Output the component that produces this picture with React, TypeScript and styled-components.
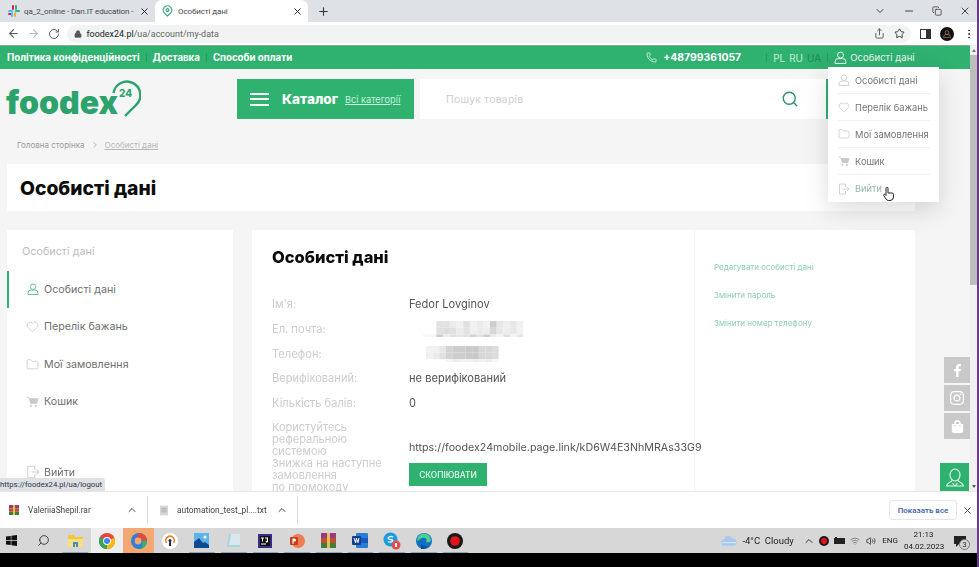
import React from "react";
import styled, { createGlobalStyle } from "styled-components";
import {
  ArrowLeft, ArrowRight, RotateCw, Lock, Share, Star, X, Plus, Minus, ChevronDown, ChevronUp,
  MoreVertical, Copy, Phone, Search, Heart, Folder, ChevronRight, Wifi, Volume2,
} from "lucide-react";
import { FaFacebookF, FaInstagram, FaShoppingBag } from "react-icons/fa";

const GREEN = "#2fb170";
const WEB = `Inter, "Noto Sans", "Liberation Sans", sans-serif`;
const UI = `Roboto, "Liberation Sans", Arial, sans-serif`;

const Global = createGlobalStyle`
  html, body { margin: 0; padding: 0; width: 979px; height: 567px; overflow: hidden; background: #000; }
  * { box-sizing: border-box; }
  svg { flex-shrink: 0; }
`;

const Shell = styled.div`
  width: 979px; height: 567px; display: flex; overflow: hidden; font-family: ${WEB};
`;
const Screen = styled.div`
  width: 977px; height: 567px; display: flex; flex-direction: column; filter: blur(0.35px);
`;
const Stripe = styled.div`width: 2px; background: #6a3b85;`;

/* Browser chrome */
const TabStrip = styled.div`
  height: 22px; background: #dee1e6; display: flex; align-items: stretch; font-family: ${UI}; color: #45494e;
`;
const Tab = styled.div<{ $active?: boolean }>`
  width: ${p => (p.$active ? 153 : 155)}px; display: flex; align-items: center; gap: ${p => (p.$active ? 5 : 4)}px;
  padding: 0 5px 0 ${p => (p.$active ? 7 : 8)}px;
  background: ${p => (p.$active ? "#fff" : "transparent")};
  border-radius: 7px 7px 0 0; font-size: 8px; letter-spacing: -.1px; white-space: nowrap;
`;
const TabTitle = styled.span`flex: 1;`;
const NewTab = styled.div`width: 30px; display: flex; align-items: center; justify-content: center; color: #333;`;
const WinControls = styled.div`
  margin-left: auto; display: flex; align-items: center; gap: 17px; padding-right: 6px; color: #444;
`;
const Toolbar = styled.div`
  height: 23px; background: #fff; display: flex; align-items: center; padding-left: 3px; color: #5f6368;
`;
const NavBtn = styled.div<{ $dim?: boolean }>`
  width: 20.5px; display: flex; justify-content: center; color: ${p => (p.$dim ? "#b9bcc0" : "#5a5d61")};
`;
const Omnibox = styled.div`
  margin-left: 2px; width: 844px; height: 18px; border-radius: 9px; background: #f1f3f4;
  display: flex; align-items: center; padding: 0 6px 0 7px; font-family: ${UI}; font-size: 8.95px; gap: 5px;
`;
const Host = styled.span`color: #222;`;
const UrlPath = styled.span`color: #666;`;
const OmniRight = styled.div`margin-left: auto; display: flex; gap: 9px; align-items: center; color: #555;`;
const ToolRight = styled.div`display: flex; align-items: center; gap: 9px; padding-left: 9px; color: #333;`;
const Avatar = styled.div`width: 14px; height: 14px; border-radius: 50%; background: #16100e; display: flex; align-items: center; justify-content: center;`;
const SidePanelIcon = styled.div`width: 11px; height: 10px; border: 1.5px solid #333; border-right-width: 5px;`;

/* Page */
const PageRow = styled.div`height: 446px; display: flex;`;
const Page = styled.div`
  position: relative; width: 970px; height: 446px; overflow: hidden; background: #f5f5f6;
`;
const ScrollTrack = styled.div`
  width: 7px; background: #f1f1f1; display: flex; flex-direction: column; align-items: center; position: relative;
`;
const ScrollArrow = styled.div<{ $down?: boolean }>`
  height: 10px; width: 100%; display: flex; justify-content: center; align-items: center;
  &::before {
    content: ""; border-left: 2.5px solid transparent; border-right: 2.5px solid transparent;
    ${p => (p.$down ? "border-top: 3px solid #555;" : "border-bottom: 3px solid #777;")}
  }
`;
const ScrollThumb = styled.div`width: 100%; height: 230px; background: #bdbdbd;`;
const ScrollSpace = styled.div`flex: 1;`;

const TopBar = styled.div`
  height: 24px; background: ${GREEN}; border-top: 1px solid #8aa99a; display: flex; align-items: center; padding-left: 7px; color: #fff;
`;
const TopLink = styled.a`font-size: 9.7px; font-weight: 700; color: #fff; white-space: nowrap;`;
const TopSep = styled.span<{ $ml?: number; $mr?: number }>`
  width: 1px; height: 9px; background: #279a61; margin: 0 ${p => p.$mr ?? 6}px 0 ${p => p.$ml ?? 6}px;
`;
const PhoneBox = styled.div`
  margin-left: 354px; display: flex; align-items: center; gap: 6px; font-size: 10.4px; font-weight: 700; white-space: nowrap;
`;
const Lang = styled.span<{ $cur?: boolean }>`font-size: 10px; margin-right: 4px; color: ${p => (p.$cur ? "#23865a" : "#c8efdb")};`;
const AccountLink = styled.div`display: flex; align-items: center; gap: 3px; font-size: 9.6px; color: #e4f7ee; white-space: nowrap;`;

const Header = styled.div`height: 66px; display: flex; padding: 10px 0 0 6px;`;
const Logo = styled.div`position: relative; width: 135px; height: 40px;`;
const LogoText = styled.span`
  position: absolute; left: 0; top: 6px; font: 900 32px/36px ${WEB}; color: #2ba36b; letter-spacing: 0;
`;
const LogoBadge = styled.svg`position: absolute; right: 0; top: 1px;`;
const Catalog = styled.div`
  margin-left: 96px; width: 177px; height: 40px; background: ${GREEN}; display: flex; align-items: center; padding-left: 13px; color: #fff;
`;
const Burger = styled.div`
  width: 19px; height: 13px; border-top: 2.5px solid #fff; border-bottom: 2.5px solid #fff; position: relative; margin-right: 13px;
  &::after { content: ""; position: absolute; left: 0; right: 0; top: 3px; height: 2.5px; background: #fff; }
`;
const CatalogTitle = styled.b`font-size: 13.6px; font-weight: 800; margin-right: 7px;`;
const CatalogLink = styled.a`font-size: 9.2px; text-decoration: underline; color: #c9f1dd; white-space: nowrap;`;
const SearchBox = styled.div`
  margin-left: 6px; width: 408px; height: 40px; background: #fff; border-right: 2px solid ${GREEN};
  display: flex; align-items: center; justify-content: space-between; padding: 0 27px 0 26px;
  color: #cfcfcf; font-size: 10.5px; letter-spacing: .2px;
`;
const Crumbs = styled.div`
  height: 29px; display: flex; align-items: center; padding: 0 0 9px 17px; gap: 5px; font-size: 8px; color: #9b9b9b; white-space: nowrap;
`;
const CrumbCurrent = styled.a`text-decoration: underline; color: #b5b5b5;`;
const TitleCard = styled.div`
  margin-left: 7px; width: 908px; height: 47px; background: #fff; display: flex; align-items: center; padding-left: 13px;
`;
const PageTitle = styled.h1`margin: 0; font-size: 19.3px; font-weight: 800; color: #0c0c0c;`;
const Columns = styled.div`margin: 19px 0 0 7px; width: 908px; display: grid; grid-template-columns: 226px 663px; gap: 19px;`;

const SideCard = styled.aside`background: #fff; height: 300px; padding-top: 15px;`;
const SideHead = styled.div`height: 25.6px; padding-left: 15px; font-size: 10.8px; line-height: 14px; color: #bdbdbd;`;
const SideRow = styled.a<{ $active?: boolean; $gap?: boolean }>`
  height: 37.5px; display: flex; align-items: center; gap: 5px; padding-left: ${p => (p.$active ? 17 : 19)}px;
  border-left: ${p => (p.$active ? `2px solid ${GREEN}` : "0")};
  margin-top: ${p => (p.$gap ? 33 : 0)}px; font-size: 10.7px; color: #6f6f6f; white-space: nowrap;
`;
const IconSlot = styled.span`width: 13px; display: flex; justify-content: center;`;
const MainCard = styled.section`background: #fff; height: 300px; display: grid; grid-template-columns: 442px 1fr;`;
const Info = styled.div`padding: 17px 0 0 20px;`;
const InfoTitle = styled.h2`margin: 0 0 25px; font-size: 16.5px; line-height: 20px; font-weight: 800; color: #0b0b0b;`;
const InfoGrid = styled.div`display: grid; grid-template-columns: 137px 1fr; grid-auto-rows: 24.7px; font-size: 11.1px; align-items: center;`;
const Label = styled.div`color: #cdcdcd;`;
const Value = styled.div`color: #555; white-space: nowrap;`;
const LongRow = styled.div`display: grid; grid-template-columns: 137px 1fr; font-size: 11px; padding-top: 7px;`;
const LongLabel = styled.div`color: #cdcdcd; line-height: 11.9px;`;
const LinkCell = styled.div`color: #555; white-space: nowrap; padding-top: 19px; line-height: 13px; font-size: 10.7px;`;
const CopyBtn = styled.button`
  margin-top: 9px; display: block; width: 78px; height: 23px; border: 0; background: ${GREEN}; color: #eafbf2;
  font: 500 8.4px ${WEB}; padding: 0;
`;
const Mosaic = styled.svg<{ $ml: number }>`display: block; margin-left: ${p => p.$ml}px;`;
const Actions = styled.div`border-left: 1px solid #f4f4f4; padding: 31px 0 0 19px; display: flex; flex-direction: column; gap: 14.6px;`;
const ActionLink = styled.a`font-size: 8px; line-height: 13.4px; color: #8bcfb2; white-space: nowrap;`;

/* Overlays */
const Menu = styled.div`
  position: absolute; left: 828px; top: 22px; width: 111px; height: 135px; background: #fff; padding: 0 9px 0 10px;
  box-shadow: 0 8px 24px rgba(0,0,0,.14); z-index: 3;
`;
const MenuRow = styled.a<{ $last?: boolean; $hover?: boolean }>`
  height: 27px; display: flex; align-items: center; gap: 5px; font-size: 9.3px; white-space: nowrap;
  color: ${p => (p.$hover ? "#94b8a7" : "#757575")};
  border-bottom: ${p => (p.$last ? "0" : "1px solid #f0f0f0")};
`;
const Cursor = styled.svg`position: absolute; left: 883px; top: 142px; z-index: 4;`;
const Social = styled.div`position: absolute; left: 944px; top: 312px; display: flex; flex-direction: column; gap: 2px; z-index: 2;`;
const SocialBtn = styled.a`width: 26px; height: 26px; background: #c9c9c9; color: #fff; display: flex; align-items: center; justify-content: center;`;
const Support = styled.div`
  position: absolute; left: 940px; top: 418px; width: 29px; height: 28px; background: ${GREEN};
  display: flex; align-items: center; justify-content: center; z-index: 2;
`;
const StatusTip = styled.div`
  position: absolute; left: 0; bottom: 0; width: 105px; height: 13px; background: #dee1e6; border-top-right-radius: 3px;
  font: 7.7px/13px ${UI}; color: #303336; white-space: nowrap; z-index: 5;
`;

/* Downloads */
const Downloads = styled.div`
  height: 37px; background: #fff; border-top: 1px solid #e6e6e6; display: flex; align-items: center; font-family: ${UI}; font-size: 8.4px; color: #444;
`;
const DlItem = styled.div<{ $w: number; $pad: number }>`
  width: ${p => p.$w}px; height: 28px; display: flex; align-items: center; padding: 0 9px 0 ${p => p.$pad}px; gap: 9px;
  border-right: 1px solid #dcdcdc; white-space: nowrap;
`;
const DlName = styled.span`flex: 1;`;
const ShowAll = styled.button`
  margin-left: auto; width: 68px; height: 20px; background: #fff; border: 1px solid #e4e6ea; border-radius: 3px;
  color: #4a69a5; font: 600 8px ${UI}; padding: 0;
`;
const DlClose = styled.div`width: 20px; display: flex; justify-content: center; color: #444;`;

/* Taskbar */
const Taskbar = styled.div`height: 25px; background: #d7d7d7; display: flex; align-items: stretch; position: relative;`;
const TaskCell = styled.div<{ $state?: "open" | "hot" | "lit"; $first?: boolean }>`
  width: 31.7px; display: flex; align-items: center; justify-content: center; position: relative;
  margin-left: ${p => (p.$first ? -4 : 0)}px;
  background: ${p => (p.$state === "hot" ? "#f2a870" : p.$state === "lit" ? "#eeeeee" : "transparent")};
  ${p => p.$state === "open" && `&::after { content:""; position:absolute; left:3px; right:3px; bottom:0; height:1px; background:#8aa6bd; }`}
`;
const Tray = styled.div`margin-left: auto; display: flex; align-items: center; font-family: ${UI}; color: #222; padding-right: 4px;`;
const Weather = styled.span`font-size: 9.5px; margin: 0 7px 0 5px; white-space: nowrap;`;
const TrayItem = styled.span`width: 15.5px; display: flex; justify-content: center; align-items: center; color: #333;`;
const Eng = styled.span`font-size: 8px; margin: 0 6px 0 4px;`;
const Clock = styled.div`width: 39px; text-align: center; font-size: 8px; line-height: 12px; white-space: nowrap;`;
const Note = styled.div`position: relative; margin-left: 10px; width: 20px; height: 18px; padding-left: 1px;`;
const NoteBadge = styled.span`
  position: absolute; right: 3px; bottom: 0; width: 11px; height: 11px; border-radius: 50%; background: #d7d7d7; border: 1px solid #777;
  font-size: 7.5px; line-height: 9px; text-align: center;
`;
const Blackout = styled.div`height: 14px; background: #000;`;

/* Drawings */
const UserIcon = ({ c = "#ccc", s = 14 }: { c?: string; s?: number }) => (
  <svg width={s} height={s} viewBox="0 0 24 24" fill="none" stroke={c} strokeWidth="1.8">
    <circle cx="12" cy="7.500" r="5.500" />
    <path d="M2 23v-3a6 6 0 0 1 6-6h8a6 6 0 0 1 6 6v3z" />
  </svg>
);
const CartIcon = ({ s = 13 }: { s?: number }) => (
  <svg width={s} height={s} viewBox="0 0 24 24" fill="#c9c9c9">
    <path d="M1 3h4l1 3h17l-3 10H8L5 5H1z" />
    <circle cx="9" cy="20" r="2" /><circle cx="18" cy="20" r="2" />
  </svg>
);
const ExitIcon = ({ s = 14 }: { s?: number }) => (
  <svg width={s} height={s} viewBox="0 0 24 24" fill="none" stroke="#cfcfcf" strokeWidth="1.8">
    <path d="M15 8V2H3v20h12v-6" /><path d="M9 12h13M18 8l4 4-4 4" />
  </svg>
);
const SlackIcon = () => (
  <svg width="12" height="12" viewBox="0 0 12 12">
    <rect x="0" y="5" width="5" height="2" rx="1" fill="#36c5f0" /><rect x="4" y="0" width="2" height="5" rx="1" fill="#e01e5a" />
    <rect x="7" y="0" width="2" height="5" rx="1" fill="#2eb67d" /><rect x="7" y="5" width="5" height="2" rx="1" fill="#2eb67d" />
    <rect x="6" y="7" width="2" height="5" rx="1" fill="#ecb22e" /><rect x="0" y="8" width="5" height="2" rx="1" fill="#e01e5a" />
    <rect x="3" y="7" width="2" height="5" rx="1" fill="#36c5f0" />
  </svg>
);
const PinIcon = () => (
  <svg width="11" height="12" viewBox="0 0 12 13" fill="none" stroke="#3aa77c" strokeWidth="1.3">
    <path d="M6 12 L2.600 8.800 A4.700 4.700 0 1 1 9.400 8.800Z" /><circle cx="6" cy="5.500" r="1.500" />
  </svg>
);
const mosaic = (rows: number[][], cell: number) => rows.flatMap((r, y) => r.map((v, x) =>
  v ? <rect key={`${x}-${y}`} x={x * cell} y={y * cell} width={cell} height={cell} fill={`rgb(${255 - v},${255 - v},${255 - v})`} /> : null));
const EmailBlur = () => (
  <Mosaic $ml={14} width="100" height="16" viewBox="0 0 100 16">
    {mosaic([
      [0, 0, 30, 30, 20, 14, 30, 14, 20, 14, 50, 24, 18, 24, 14],
      [0, 0, 30, 34, 30, 20, 30, 16, 20, 18, 40, 24, 18, 24, 14],
      [8, 10, 50, 20, 30, 24, 30, 46, 30, 50, 20, 12, 30, 12, 26],
    ], 6.7)}
  </Mosaic>
);
const PhoneBlur = () => (
  <Mosaic $ml={17} width="74" height="16" viewBox="0 0 74 16">
    {mosaic([
      [14, 14, 24, 44, 50, 50, 54, 54, 40, 40, 34],
      [14, 20, 30, 44, 50, 50, 54, 54, 40, 40, 34],
      [0, 0, 0, 10, 18, 14, 14, 18, 14, 18, 8],
    ], 6.6)}
  </Mosaic>
);
const WinLogo = () => (
  <svg width="11" height="11" viewBox="0 0 11 11" fill="#111"><path d="M0 1.600 4.800.9v4.200H0zM5.400.8 11 0v5.100H5.400zM0 5.800h4.800V10L0 9.400zM5.400 5.800H11V11l-5.600-.8z" /></svg>
);
const Explorer = () => (
  <svg width="15" height="13" viewBox="0 0 15 13"><path d="M0 1h6l1 2h8v10H0z" fill="#f4c542" /><path d="M0 5h15v8H0z" fill="#fadf80" /><path d="M5 8h5v5H8v-3H7v3H5z" fill="#3f8fc4" /></svg>
);
const Chrome = () => (
  <svg width="16" height="16" viewBox="0 0 16 16">
    <circle cx="8" cy="8" r="8" fill="#e8453c" /><path d="M8 8 1 4A8 8 0 0 0 8 16l3.500-5z" fill="#34a853" /><path d="M8 8l7.300-3.200A8 8 0 0 1 8 16z" fill="#fbbc05" />
    <circle cx="8" cy="8" r="3.900" fill="#fff" /><circle cx="8" cy="8" r="3" fill="#4285f4" />
  </svg>
);
const EdgeDev = () => (
  <svg width="16" height="16" viewBox="0 0 16 16">
    <circle cx="8" cy="8" r="8" fill="#2f7fd6" /><path d="M8 0a8 8 0 0 1 8 8h-5a4 4 0 0 0-6-3z" fill="#e04a3f" /><path d="M16 8a8 8 0 0 1-8 8c3 0 4-3 3-8z" fill="#2bb673" />
    <circle cx="7" cy="8" r="3.400" fill="#f2a870" />
  </svg>
);
const OpenVpn = () => (
  <svg width="16" height="16" viewBox="0 0 16 16"><circle cx="8" cy="8" r="8" fill="#fff" /><path d="M4.600 10a4.200 4.200 0 1 1 6.800 0" fill="none" stroke="#e8862e" strokeWidth="1.500" /><circle cx="8" cy="7.500" r="1.500" fill="#1c2a50" /><path d="M7.200 8h1.600l.3 5H6.900z" fill="#1c2a50" /></svg>
);
const Photos = () => (
  <svg width="15" height="15" viewBox="0 0 15 15"><rect width="15" height="15" fill="#5bb5ea" /><path d="M0 15V9l5-4 4 5 2-1 4 3v3z" fill="#0e4a8f" /><circle cx="11" cy="4" r="1.500" fill="#fff" /></svg>
);
const Notes = () => (
  <svg width="15" height="15" viewBox="0 0 15 15"><path d="M3 1h11v13H1z" fill="#a9d3dd" /><path d="M5 1h9v11H3z" fill="#d8e8ec" /></svg>
);
const Idea = () => (
  <svg width="14" height="14" viewBox="0 0 14 14"><rect width="14" height="14" fill="#3b2a8c" /><rect x="2" y="2" width="10" height="10" fill="#111" /><rect x="3" y="9.500" width="5" height="1" fill="#fff" /><path d="M3 3.500h3v1H5v3H4v-3H3zM7 3.500h3v3.500a1 1 0 0 1-2.500.5l.6-.5h.7V4.500H7z" fill="#fff" /></svg>
);
const Ppt = () => (
  <svg width="16" height="16" viewBox="0 0 16 16"><circle cx="9" cy="8" r="7" fill="#ed7d55" /><rect x="1" y="4" width="8" height="8" rx="1" fill="#c43e1c" /><path d="M3.500 5.500h2a1.500 1.500 0 0 1 0 3h-1V11h-1z" fill="#fff" /></svg>
);
const Rar = ({ s = 15 }: { s?: number }) => (
  <svg width={s} height={s} viewBox="0 0 15 15"><rect y="0" width="15" height="5" fill="#9c3b7b" /><rect y="5" width="15" height="5" fill="#c24e32" /><rect y="10" width="15" height="5" fill="#3f7d3e" /><rect x="6" width="3" height="15" fill="#e3c05a" /></svg>
);
const Word = () => (
  <svg width="16" height="15" viewBox="0 0 16 15"><rect x="4" width="12" height="15" rx="1" fill="#2b7cd3" /><rect x="4" y="5" width="12" height="5" fill="#185abd" /><rect y="3" width="9" height="9" rx="1" fill="#103f91" /><path d="M1.500 5h1l.8 3 .8-3h.8l.8 3 .8-3h1L6.400 10h-.8l-.8-3-.8 3h-.8z" fill="#fff" /></svg>
);
const Skype = () => (
  <svg width="18" height="18" viewBox="0 0 18 18"><circle cx="7.500" cy="7.500" r="7" fill="#1a9be0" /><path d="M10 5a3 2 0 0 0-5 1c0 2 5 1 5 3a3 2 0 0 1-5 .5" fill="none" stroke="#fff" strokeWidth="1.300" /><circle cx="13" cy="13" r="4.500" fill="#e44d4d" /><rect x="12" y="11" width="2" height="4" fill="#fff" /></svg>
);
const Edge = () => (
  <svg width="16" height="16" viewBox="0 0 16 16"><circle cx="8" cy="8" r="8" fill="#1170c5" /><path d="M1 8a7 7 0 0 1 14-1c0 2-3 3-5 2 2-3-1-5-4-4-3 1-4 3-5 3z" fill="#4ad18e" /><path d="M5 9c0 3 3 5 7 4a8 8 0 0 1-7 3z" fill="#0b4f94" /></svg>
);
const Rec = ({ s = 16 }: { s?: number }) => (
  <svg width={s} height={s} viewBox="0 0 16 16"><circle cx="8" cy="8" r="8" fill="#1a1a1a" /><circle cx="8" cy="8" r="4.800" fill="#e3151c" /></svg>
);
const Cloud = () => (
  <svg width="16" height="11" viewBox="0 0 18 12"><path d="M4 12a3.500 3.500 0 0 1-.5-7 5 5 0 0 1 9.500-1 4 4 0 0 1 1 8z" fill="#a9c9ec" /><path d="M1 8h16v1H1z" fill="#e3eefa" /></svg>
);

const menuItems = [
  { t: "Особисті дані", i: <UserIcon s={12} /> },
  { t: "Перелік бажань", i: <Heart size={12} color="#ccc" strokeWidth={1.6} /> },
  { t: "Мої замовлення", i: <Folder size={12} color="#ccc" strokeWidth={1.6} /> },
  { t: "Кошик", i: <CartIcon s={12} /> },
];
const sideItems = [
  { t: "Перелік бажань", i: <Heart size={13} color="#ccc" strokeWidth={1.6} /> },
  { t: "Мої замовлення", i: <Folder size={13} color="#ccc" strokeWidth={1.6} /> },
  { t: "Кошик", i: <CartIcon /> },
];
const tasks: { k: string; n: React.ReactNode; s?: "open" | "hot" | "lit" }[] = [
  { k: "win", n: <WinLogo /> },
  { k: "search", n: <Search size={13} color="#222" strokeWidth={1.5} style={{ transform: "scaleX(-1)" }} /> },
  { k: "files", n: <Explorer />, s: "open" },
  { k: "chrome", n: <Chrome />, s: "lit" },
  { k: "dev", n: <EdgeDev />, s: "hot" },
  { k: "vpn", n: <OpenVpn /> },
  { k: "photos", n: <Photos />, s: "open" },
  { k: "notes", n: <Notes />, s: "open" },
  { k: "idea", n: <Idea />, s: "open" },
  { k: "ppt", n: <Ppt />, s: "open" },
  { k: "rar", n: <Rar />, s: "open" },
  { k: "word", n: <Word />, s: "open" },
  { k: "skype", n: <Skype />, s: "open" },
  { k: "edge", n: <Edge />, s: "open" },
  { k: "rec", n: <Rec />, s: "open" },
];

export default function App() {
  return (
    <Shell>
      <Global />
      <Screen>
        <TabStrip>
          <Tab><SlackIcon /><TabTitle>qa_2_online - Dan.IT education -</TabTitle><X size={11} color="#222" /></Tab>
          <Tab $active><PinIcon /><TabTitle>Особисті дані</TabTitle><X size={11} color="#222" /></Tab>
          <NewTab><Plus size={13} strokeWidth={2} /></NewTab>
          <WinControls>
            <ChevronDown size={12} /><Minus size={12} /><Copy size={10} strokeWidth={2} /><X size={12} />
          </WinControls>
        </TabStrip>
        <Toolbar>
          <NavBtn><ArrowLeft size={13} /></NavBtn>
          <NavBtn $dim><ArrowRight size={13} /></NavBtn>
          <NavBtn><RotateCw size={12} /></NavBtn>
          <Omnibox>
            <Lock size={8} color="#555" fill="#555" />
            <span><Host>foodex24.pl</Host><UrlPath>/ua/account/my-data</UrlPath></span>
            <OmniRight><Share size={11} /><Star size={11} color="#333" /></OmniRight>
          </Omnibox>
          <ToolRight>
            <SidePanelIcon />
            <Avatar><UserIcon c="#b9a08a" s={8} /></Avatar>
            <MoreVertical size={12} />
          </ToolRight>
        </Toolbar>
        <PageRow>
          <Page>
            <TopBar>
              <TopLink>Політика конфіденційності</TopLink><TopSep />
              <TopLink>Доставка</TopLink><TopSep />
              <TopLink>Способи оплати</TopLink>
              <PhoneBox><Phone size={11} strokeWidth={1.5} />+48799361057</PhoneBox>
              <TopSep $ml={25} />
              <Lang>PL</Lang><Lang>RU</Lang><Lang $cur>UA</Lang>
              <TopSep $ml={2} />
              <AccountLink><UserIcon c="#eafbf2" s={13} />Особисті дані</AccountLink>
            </TopBar>
            <Header>
              <Logo>
                <LogoText>foodex</LogoText>
                <LogoBadge width="30" height="38" viewBox="0 0 30 38" fill="none">
                  <path d="M2.500 13 A13.500 13.500 0 1 1 25 25 L14 36" stroke="#2ba36b" strokeWidth="2.400" />
                  <text x="8" y="17" fontFamily="Inter, sans-serif" fontWeight="800" fontSize="10" fill="#2ba36b">24</text>
                </LogoBadge>
              </Logo>
              <Catalog>
                <Burger />
                <CatalogTitle>Каталог</CatalogTitle>
                <CatalogLink>Всі категорії</CatalogLink>
              </Catalog>
              <SearchBox>Пошук товарів<Search size={18} color="#2c8f6b" strokeWidth={1.8} /></SearchBox>
            </Header>
            <Crumbs>
              Головна сторінка <ChevronRight size={10} color="#aaa" /> <CrumbCurrent>Особисті дані</CrumbCurrent>
            </Crumbs>
            <TitleCard><PageTitle>Особисті дані</PageTitle></TitleCard>
            <Columns>
              <SideCard>
                <SideHead>Особисті дані</SideHead>
                <SideRow $active><IconSlot><UserIcon c="#5db894" s={12} /></IconSlot>Особисті дані</SideRow>
                {sideItems.map(s => <SideRow key={s.t}><IconSlot>{s.i}</IconSlot>{s.t}</SideRow>)}
                <SideRow $gap><IconSlot><ExitIcon /></IconSlot>Вийти</SideRow>
              </SideCard>
              <MainCard>
                <Info>
                  <InfoTitle>Особисті дані</InfoTitle>
                  <InfoGrid>
                    <Label>Ім'я:</Label><Value>Fedor Lovginov</Value>
                    <Label>Ел. почта:</Label><EmailBlur />
                    <Label>Телефон:</Label><PhoneBlur />
                    <Label>Верифікований:</Label><Value>не верифікований</Value>
                    <Label>Кількість балів:</Label><Value>0</Value>
                  </InfoGrid>
                  <LongRow>
                    <LongLabel>Користуйтесь<br />реферальною<br />системою<br />Знижка на наступне<br />замовлення<br />по промокоду</LongLabel>
                    <LinkCell>
                      https://foodex24mobile.page.link/kD6W4E3NhMRAs33G9
                      <CopyBtn>СКОПІЮВАТИ</CopyBtn>
                    </LinkCell>
                  </LongRow>
                </Info>
                <Actions>
                  <ActionLink>Редагувати особисті дані</ActionLink>
                  <ActionLink>Змінити пароль</ActionLink>
                  <ActionLink>Змінити номер телефону</ActionLink>
                </Actions>
              </MainCard>
            </Columns>

            <Menu>
              {menuItems.map(m => <MenuRow key={m.t}>{m.i}{m.t}</MenuRow>)}
              <MenuRow $last $hover><ExitIcon s={12} />Вийти</MenuRow>
            </Menu>
            <Cursor width="11" height="14" viewBox="0 0 11 14" fill="#fff" stroke="#222" strokeWidth="1">
              <path d="M3 1.200a1 1 0 0 1 2 0V6h4a1.500 1.500 0 0 1 1.500 1.500V10a3.500 3.500 0 0 1-3.500 3.500H5.500A3 3 0 0 1 3 12L.7 8.500c-.5-1 .8-1.800 1.500-1L3 8.500z" />
            </Cursor>
            <Social>
              <SocialBtn><FaFacebookF size={13} /></SocialBtn>
              <SocialBtn><FaInstagram size={16} /></SocialBtn>
              <SocialBtn><FaShoppingBag size={13} /></SocialBtn>
            </Social>
            <Support>
              <svg width="20" height="21" viewBox="0 0 20 21" fill="none" stroke="#e5fbf0" strokeWidth="1.100">
                <path d="M5 8a5 6 0 0 1 10 0c0 3-2 6-5 6s-5-3-5-6z" />
                <path d="M7 13.500c-1 2-5 2-5.500 5.500h17c-.5-3.500-4.500-3.500-5.500-5.500M7.500 16l2.500 3 2.500-3" />
              </svg>
            </Support>
            <StatusTip>https://foodex24.pl/ua/logout</StatusTip>
          </Page>
          <ScrollTrack>
            <ScrollArrow />
            <ScrollThumb />
            <ScrollSpace />
            <ScrollArrow $down />
          </ScrollTrack>
        </PageRow>
        <Downloads>
          <DlItem $w={148} $pad={9}><Rar s={10} /><DlName>ValeriiaShepil.rar</DlName><ChevronUp size={12} /></DlItem>
          <DlItem $w={150} $pad={12}>
            <svg width="8" height="11" viewBox="0 0 9 11"><rect width="9" height="11" fill="#d7d7d7" /><path d="M1.500 3h6M1.500 5h6M1.500 7h6" stroke="#aaa" /></svg>
            <DlName>automation_test_pl....txt</DlName><ChevronUp size={12} />
          </DlItem>
          <ShowAll>Показать все</ShowAll>
          <DlClose><X size={11} /></DlClose>
        </Downloads>
        <Taskbar>
          {tasks.map((t, i) => <TaskCell key={t.k} $state={t.s} $first={i === 0}>{t.n}</TaskCell>)}
          <Tray>
            <Cloud />
            <Weather>-4°C&nbsp;&nbsp;Cloudy</Weather>
            <TrayItem><ChevronUp size={12} /></TrayItem>
            <TrayItem><Rec s={10} /></TrayItem>
            <TrayItem><svg width="11" height="8" viewBox="0 0 11 8"><rect y="1" width="11" height="6" fill="#222" /><rect x="1" width="2" height="2" fill="#222" /></svg></TrayItem>
            <TrayItem><Wifi size={10} color="#777" /></TrayItem>
            <TrayItem><Volume2 size={10} /></TrayItem>
            <Eng>ENG</Eng>
            <Clock>21:13<br />04.02.2023</Clock>
            <Note>
              <svg width="12" height="11" viewBox="0 0 12 11" fill="#222"><path d="M0 0h12v8H5L2 11V8H0z" /></svg>
              <NoteBadge>3</NoteBadge>
            </Note>
          </Tray>
        </Taskbar>
        <Blackout />
      </Screen>
      <Stripe />
    </Shell>
  );
}
